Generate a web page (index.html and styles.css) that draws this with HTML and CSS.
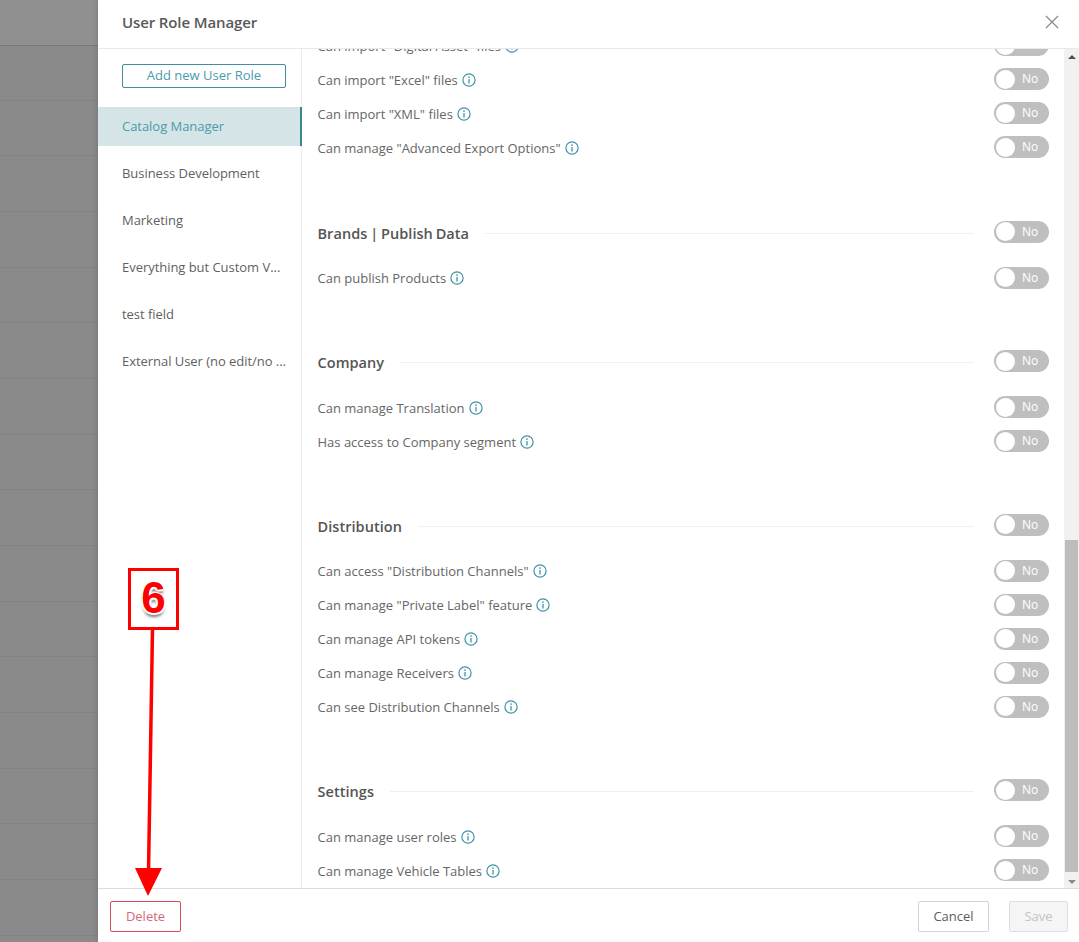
FILE: index.html
```html
<!DOCTYPE html>
<html lang="en">
<head>
<meta charset="utf-8">
<title>User Role Manager</title>
<link rel="stylesheet" href="styles.css">
</head>
<body>
<svg width="0" height="0" class="defs"><defs>
<symbol id="info" viewBox="0 0 14 14"><circle cx="7" cy="7" r="6.1" fill="none" stroke="currentColor" stroke-width="1.2"/><circle cx="7" cy="4.100" r=".85" fill="currentColor"/><path d="M7 6v4.600" stroke="currentColor" stroke-width="1.3" fill="none"/></symbol>
</defs></svg>
<div class="page">
  <div class="backdrop">
    <div class="bd-row bd-top"></div>
    <div class="bd-row bd-second"></div><div class="bd-row"></div><div class="bd-row"></div><div class="bd-row"></div>
    <div class="bd-row"></div><div class="bd-row"></div><div class="bd-row"></div><div class="bd-row"></div>
    <div class="bd-row"></div><div class="bd-row"></div><div class="bd-row"></div><div class="bd-row"></div>
    <div class="bd-row"></div><div class="bd-row"></div><div class="bd-row"></div><div class="bd-row"></div>
  </div>
  <div class="modal">
    <header class="modal-head">
      <h1 class="modal-title">User Role Manager</h1>
      <svg class="close" width="14" height="14" viewBox="0 0 14 14"><path d="M1 1l12 12M13 1L1 13" stroke="#8c8c8c" stroke-width="1.3" fill="none"/></svg>
    </header>
    <div class="modal-body">
      <aside class="sidebar">
        <div class="add-wrap"><button class="btn-add">Add new User Role</button></div>
        <ul class="roles">
          <li class="role active">Catalog Manager</li>
          <li class="role">Business Development</li>
          <li class="role">Marketing</li>
          <li class="role">Everything but Custom V...</li>
          <li class="role">test field</li>
          <li class="role">External User (no edit/no ...</li>
        </ul>
      </aside>
      <main class="content">
        <div class="scroller">
          <section class="group first">
            <div class="perm"><span class="perm-label">Can import "Digital Asset" files <svg class="info"><use href="#info"/></svg></span><span class="toggle"><i class="knob"></i><b>No</b></span></div>
            <div class="perm"><span class="perm-label">Can import "Excel" files <svg class="info"><use href="#info"/></svg></span><span class="toggle"><i class="knob"></i><b>No</b></span></div>
            <div class="perm"><span class="perm-label">Can import "XML" files <svg class="info"><use href="#info"/></svg></span><span class="toggle"><i class="knob"></i><b>No</b></span></div>
            <div class="perm"><span class="perm-label">Can manage "Advanced Export Options" <svg class="info"><use href="#info"/></svg></span><span class="toggle"><i class="knob"></i><b>No</b></span></div>
          </section>
          <section class="group">
            <div class="group-head"><h2>Brands | Publish Data</h2><span class="rule"></span><span class="toggle"><i class="knob"></i><b>No</b></span></div>
            <div class="perm"><span class="perm-label">Can publish Products <svg class="info"><use href="#info"/></svg></span><span class="toggle"><i class="knob"></i><b>No</b></span></div>
          </section>
          <section class="group">
            <div class="group-head"><h2>Company</h2><span class="rule"></span><span class="toggle"><i class="knob"></i><b>No</b></span></div>
            <div class="perm"><span class="perm-label">Can manage Translation <svg class="info"><use href="#info"/></svg></span><span class="toggle"><i class="knob"></i><b>No</b></span></div>
            <div class="perm"><span class="perm-label">Has access to Company segment <svg class="info"><use href="#info"/></svg></span><span class="toggle"><i class="knob"></i><b>No</b></span></div>
          </section>
          <section class="group">
            <div class="group-head"><h2>Distribution</h2><span class="rule"></span><span class="toggle"><i class="knob"></i><b>No</b></span></div>
            <div class="perm"><span class="perm-label">Can access "Distribution Channels" <svg class="info"><use href="#info"/></svg></span><span class="toggle"><i class="knob"></i><b>No</b></span></div>
            <div class="perm"><span class="perm-label">Can manage "Private Label" feature <svg class="info"><use href="#info"/></svg></span><span class="toggle"><i class="knob"></i><b>No</b></span></div>
            <div class="perm"><span class="perm-label">Can manage API tokens <svg class="info"><use href="#info"/></svg></span><span class="toggle"><i class="knob"></i><b>No</b></span></div>
            <div class="perm"><span class="perm-label">Can manage Receivers <svg class="info"><use href="#info"/></svg></span><span class="toggle"><i class="knob"></i><b>No</b></span></div>
            <div class="perm"><span class="perm-label">Can see Distribution Channels <svg class="info"><use href="#info"/></svg></span><span class="toggle"><i class="knob"></i><b>No</b></span></div>
          </section>
          <section class="group">
            <div class="group-head"><h2>Settings</h2><span class="rule"></span><span class="toggle"><i class="knob"></i><b>No</b></span></div>
            <div class="perm"><span class="perm-label">Can manage user roles <svg class="info"><use href="#info"/></svg></span><span class="toggle"><i class="knob"></i><b>No</b></span></div>
            <div class="perm"><span class="perm-label">Can manage Vehicle Tables <svg class="info"><use href="#info"/></svg></span><span class="toggle"><i class="knob"></i><b>No</b></span></div>
          </section>
        </div>
        <div class="scrollbar">
          <span class="arrow-up"></span>
          <span class="thumb"></span>
          <span class="arrow-down"></span>
        </div>
      </main>
    </div>
    <footer class="modal-foot">
      <button class="btn btn-delete">Delete</button>
      <span class="foot-right">
        <button class="btn btn-cancel">Cancel</button>
        <button class="btn btn-save">Save</button>
      </span>
    </footer>
  </div>
  <div class="callout">6</div>
  <svg class="arrow" width="60" height="270" viewBox="0 0 60 270"><path d="M32.500 0L28.500 243" stroke="#f00" stroke-width="3.500" fill="none"/><path d="M15 239H42L28 267Z" fill="#f00"/></svg>
</div>
</body>
</html>
```
FILE: styles.css
```css
* { box-sizing: border-box; }
html, body { margin: 0; padding: 0; }
body { font-family: "Open Sans", "Noto Sans", sans-serif; color: #5c5c5c; overflow: hidden; }
.defs { position: absolute; }
.page { position: relative; width: 1079px; height: 942px; display: flex; overflow: hidden; background: #8a8a8a; }
.backdrop { width: 98px; flex: none; display: flex; flex-direction: column; }
.bd-row { height: 55.7px; flex: none; border-bottom: 1px solid #848484; }
.bd-top { height: 46px; background: #909090; border-bottom: 1px solid #787878; }
.bd-second { height: 54.500px; }
.modal { width: 981px; flex: none; background: #fff; display: flex; flex-direction: column; box-shadow: -2px 0 4px rgba(0,0,0,.1); }
.modal-head { height: 49px; flex: none; display: flex; align-items: center; justify-content: space-between; padding: 0 20px 4px 24px; border-bottom: 1px solid #e9e9e9; }
.modal-title { margin: 0; font-size: 15px; font-weight: 600; letter-spacing: -.12px; color: #595959; }
.modal-body { flex: 1; min-height: 0; display: flex; }
.sidebar { width: 204px; flex: none; border-right: 1px solid #ececec; }
.add-wrap { padding: 15px 16px 19px 24px; }
.btn-add { display: block; width: 164px; height: 24px; padding: 0 0 2px; background: #fff; border: 1px solid #3f8fa0; border-radius: 2px; color: #4a9bac; font: 13px "Open Sans", sans-serif; }
.roles { list-style: none; margin: 0; padding: 0; }
.role { height: 39px; margin-bottom: 8px; padding-left: 24px; line-height: 39px; font-size: 13px; letter-spacing: -.04px; color: #5f5f5f; white-space: nowrap; }
.role.active { margin-right: -1px; background: #d5e4e6; color: #4a9bac; border-right: 2px solid #3a8497; }
.content { flex: 1; min-width: 0; display: flex; }
.scroller { flex: 1; min-width: 0; height: 839px; overflow: hidden; padding: 0 15px 0 15.500px; }
.group { margin-bottom: 49.500px; }
.group.first { margin-top: -21px; margin-bottom: 50.500px; }
.group-head { height: 34px; margin-bottom: 12px; display: flex; align-items: center; }
.group-head h2 { margin: 3px 0 0; font-size: 14.500px; font-weight: 600; letter-spacing: .05px; word-spacing: -1px; color: #555; }
.rule { flex: 1; height: 1px; margin: 3px 20px 0 16px; background: #f0f0f0; }
.perm { height: 34px; display: flex; align-items: center; justify-content: space-between; }
.perm-label { display: flex; align-items: center; gap: 4px; padding-top: 1px; font-size: 13px; color: #666; white-space: nowrap; }
.info { width: 14px; height: 14px; color: #3f93a6; flex: none; }
.toggle { position: relative; width: 55px; height: 22px; flex: none; border-radius: 11px; background: #bfbfbf; display: block; }
.toggle b { position: absolute; left: 28px; top: 0; font-size: 12px; line-height: 22px; font-weight: 400; color: #fff; }
.knob { position: absolute; left: 2px; top: 1.500px; width: 19px; height: 19px; border-radius: 50%; background: #fff; }
.scrollbar { width: 15px; flex: none; background: #f1f1f1; position: relative; display: flex; flex-direction: column; align-items: center; justify-content: space-between; padding: 6px 0 4px; }
.arrow-up { width: 0; height: 0; border: 4px solid transparent; border-top: 0; border-bottom: 4px solid #505050; }
.arrow-down { width: 0; height: 0; border: 4px solid transparent; border-bottom: 0; border-top: 4px solid #8a8a8a; }
.thumb { position: absolute; left: 1px; right: 1px; top: 491px; height: 332px; background: #bdbdbd; }
.modal-foot { height: 54px; flex: none; display: flex; align-items: center; justify-content: space-between; padding: 1px 11px 0 12px; border-top: 1px solid #dcdcdc; }
.foot-right { display: flex; gap: 20px; }
.btn { height: 31px; width: 71px; padding: 0; background: #fff; border: 1px solid #d4d4d4; border-radius: 2px; font: 13px "Open Sans", sans-serif; color: #5c5c5c; }
.btn-delete { border-color: #d9485a; color: #d46a78; }
.btn-save { width: 59px; background: #f5f5f5; color: #c4c4c4; border-color: #dedede; }
.callout { position: absolute; left: 128px; top: 568px; width: 51px; height: 62px; padding-bottom: 3px; border: 3px solid #f00; background: #fff; display: flex; align-items: center; justify-content: center; font: 700 44px "Liberation Sans", sans-serif; color: #f00; text-shadow: 1px 0 0 #fff, -1px 0 0 #fff, 0 -1px 0 #fff, 0 1px 0 #fff, 2px 1px 1px #fff, -2px 1px 1px #fff, 0 2px 1px #fff, 0 4px 3px rgba(0,0,0,.55); }
.arrow { position: absolute; left: 120px; top: 629px; }
```
